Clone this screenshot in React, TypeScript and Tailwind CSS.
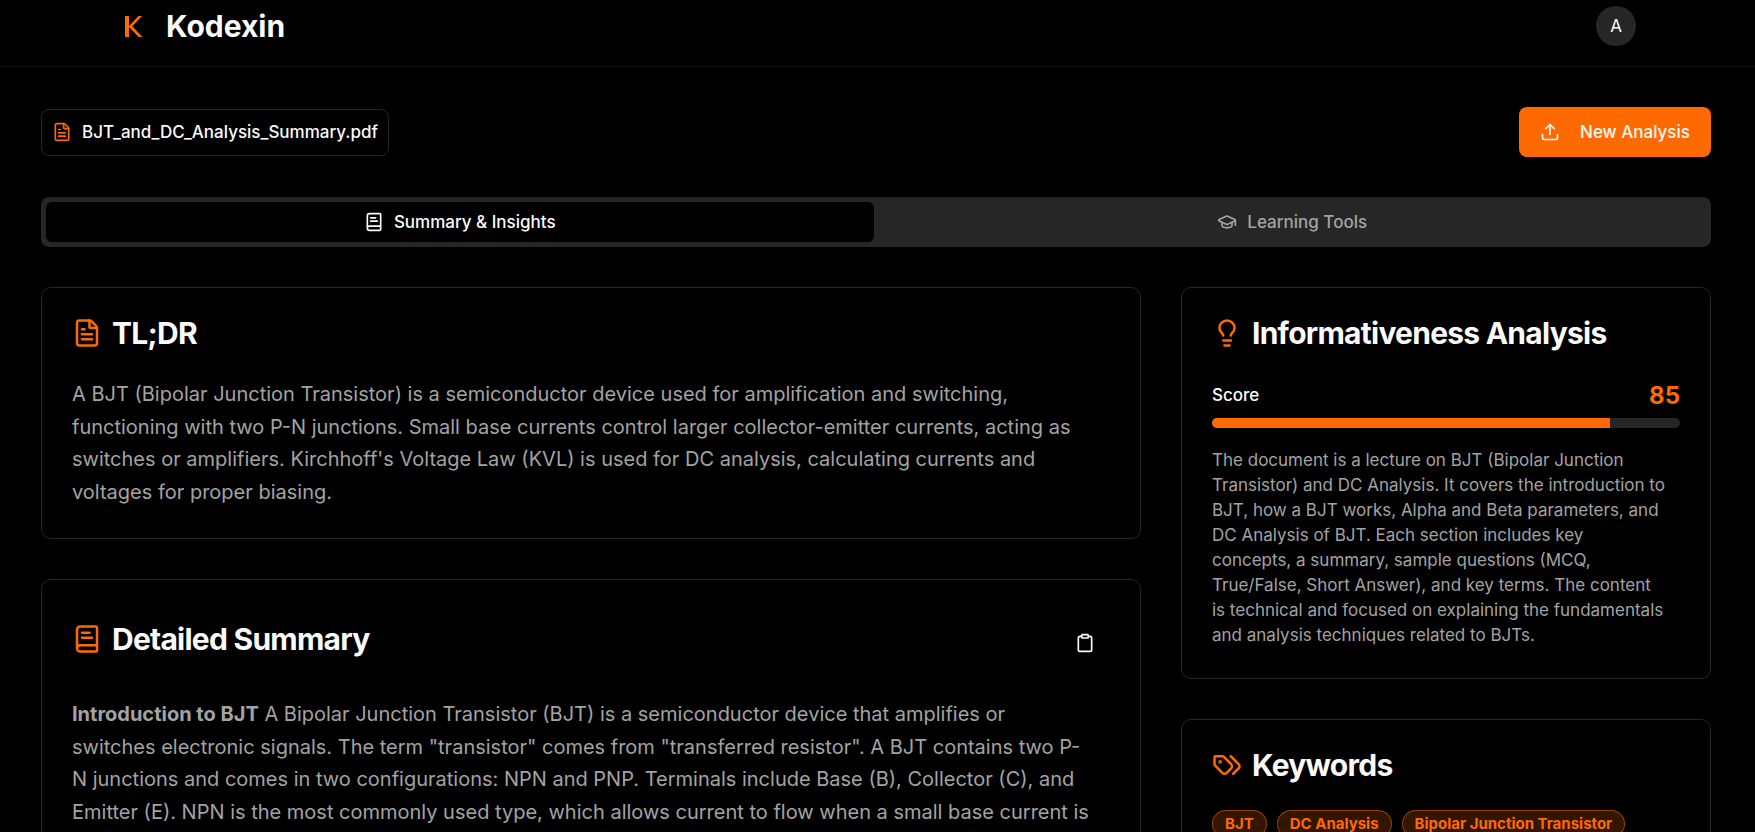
import type { ComponentType, ReactNode } from "react";
import { useState } from "react";
import {
	BookText,
	Clipboard,
	FileText,
	GraduationCap,
	Lightbulb,
	Upload,
} from "lucide-react";
import { LuTags } from "react-icons/lu";

const score = 85;
const keywords = ["BJT", "DC Analysis", "Bipolar Junction Transistor"];

const tabs = [
	{ id: "summary", label: "Summary & Insights", icon: BookText },
	{ id: "learning", label: "Learning Tools", icon: GraduationCap },
];

function Card({ children }: { children: ReactNode }) {
	return (
		<section className="rounded-[10px] border border-[#262626] p-[30px]">
			{children}
		</section>
	);
}

function CardTitle({
	icon: Icon,
	children,
}: {
	icon: ComponentType<{ className?: string }>;
	children: ReactNode;
}) {
	return (
		<h2 className="flex items-center gap-2.5 text-[30px] leading-none font-bold tracking-tight text-neutral-50">
			<Icon className="size-[30px] shrink-0 text-[#ff6a00]" />
			{children}
		</h2>
	);
}

function Logo() {
	return (
		<svg viewBox="0 0 36 36" className="size-9" aria-hidden="true">
			<rect x="9" y="8" width="4" height="21" fill="#ff6a00" />
			<path
				d="M22.4 8 H26 L16.4 18.3 L26.4 29 H22.6 L13.6 19.6 L12 20.6 V17.6 L13.6 17.4 Z"
				fill="#ff6a00"
			/>
		</svg>
	);
}

function Header() {
	return (
		<header className="border-b border-[#121212] pt-1.5 pr-[3px] pb-5">
			<div className="mx-auto flex max-w-[1520px] items-center justify-between">
				<a href="#" className="flex items-center gap-3.5">
					<Logo />
					<span className="text-[30px] leading-9 font-bold">Kodexin</span>
				</a>
				<button
					type="button"
					aria-label="Account"
					className="flex size-10 items-center justify-center rounded-full bg-[#262626] text-[17px] leading-[25px]"
				>
					A
				</button>
			</div>
		</header>
	);
}

export default function App() {
	const [active, setActive] = useState("summary");

	return (
		<div className="min-h-screen bg-black font-['Inter',sans-serif] text-neutral-50">
			<Header />

			<div className="pr-[3px]">
				<main className="mx-auto max-w-[1670px] pt-10 pb-10">
					<div className="flex items-center justify-between">
						<div className="flex items-center gap-2.5 rounded-lg border border-[#262626] p-2.5 text-[17px] leading-[25px] font-medium">
							<FileText className="size-5 text-[#ff6a00]" />
							BJT_and_DC_Analysis_Summary.pdf
						</div>
						<button
							type="button"
							className="flex h-[50px] w-48 items-center justify-center gap-5 rounded-lg bg-[#ff6a00] text-[17px] leading-[25px] font-medium"
						>
							<Upload className="size-5" />
							New Analysis
						</button>
					</div>

					<div
						role="tablist"
						className="mt-10 grid h-[50px] grid-cols-2 gap-[5px] rounded-lg bg-[#262626] p-[5px]"
					>
						{tabs.map(({ id, label, icon: Icon }) => (
							<button
								key={id}
								type="button"
								role="tab"
								aria-selected={active === id}
								onClick={() => setActive(id)}
								className={`flex items-center justify-center gap-2.5 rounded-md text-[17px] leading-[25px] font-medium ${
									active === id ? "bg-black text-neutral-50" : "text-[#a3a3a3]"
								}`}
							>
								<Icon className="size-5" />
								{label}
							</button>
						))}
					</div>

					<div className="mt-10 grid grid-cols-3 items-start gap-10">
						{/* Summaries */}
						<div className="col-span-2 flex flex-col gap-10">
							<Card>
								<CardTitle icon={FileText}>TL;DR</CardTitle>
								<p className="mt-[30px] text-xl leading-relaxed text-[#a3a3a3]">
									A BJT (Bipolar Junction Transistor) is a semiconductor device
									used for amplification and switching, functioning with two P-N
									junctions. Small base currents control larger
									collector-emitter currents, acting as switches or amplifiers.
									Kirchhoff's Voltage Law (KVL) is used for DC analysis,
									calculating currents and voltages for proper biasing.
								</p>
							</Card>

							<Card>
								<div className="flex items-center justify-between">
									<CardTitle icon={BookText}>Detailed Summary</CardTitle>
									<div className="pt-2">
										<button
											type="button"
											aria-label="Copy summary"
											className="flex size-[50px] items-center justify-center rounded-lg"
										>
											<Clipboard className="size-5" />
										</button>
									</div>
								</div>
								<p className="mt-[30px] pr-[18px] text-xl leading-relaxed text-[#a3a3a3]">
									<strong className="font-bold">Introduction to BJT</strong> A
									Bipolar Junction Transistor (BJT) is a semiconductor device
									that amplifies or switches electronic signals. The term
									"transistor" comes from "transferred resistor". A BJT contains
									two P-N junctions and comes in two configurations: NPN and
									PNP. Terminals include Base (B), Collector (C), and Emitter
									(E). NPN is the most commonly used type, which allows current
									to flow when a small base current is
								</p>
							</Card>
						</div>

						{/* Sidebar */}
						<div className="flex flex-col gap-10">
							<Card>
								<CardTitle icon={Lightbulb}>Informativeness Analysis</CardTitle>
								<div className="mt-[30px] flex items-center justify-between">
									<span className="text-[17px] font-medium">Score</span>
									<span className="text-2xl leading-[35px] font-bold text-[#ff6a00]">
										{score}
									</span>
								</div>
								<div className="mt-[5px] h-2.5 overflow-hidden rounded-full bg-[#262626]">
									<div
										className="h-full bg-[#ff6a00]"
										style={{ width: `${score}%` }}
									/>
								</div>
								<p className="mt-5 text-[17px] leading-[25px] text-[#a3a3a3]">
									The document is a lecture on BJT (Bipolar Junction
									Transistor) and DC Analysis. It covers the introduction to
									BJT, how a BJT works, Alpha and Beta parameters, and DC
									Analysis of BJT. Each section includes key
									<br />
									concepts, a summary, sample questions (MCQ,
									<br />
									True/False, Short Answer), and key terms. The content
									<br />
									is technical and focused on explaining the fundamentals
									<br />
									and analysis techniques related to BJTs.
								</p>
							</Card>

							<Card>
								<CardTitle icon={LuTags}>Keywords</CardTitle>
								<ul className="mt-[30px] flex flex-wrap gap-2.5">
									{keywords.map((keyword) => (
										<li
											key={keyword}
											className="rounded-full border border-[#ff6a00]/50 bg-[#ff6a00]/20 px-3 py-[3px] text-[15px] leading-5 font-bold text-[#ff6a00]"
										>
											{keyword}
										</li>
									))}
								</ul>
							</Card>
						</div>
					</div>
				</main>
			</div>
		</div>
	);
}
